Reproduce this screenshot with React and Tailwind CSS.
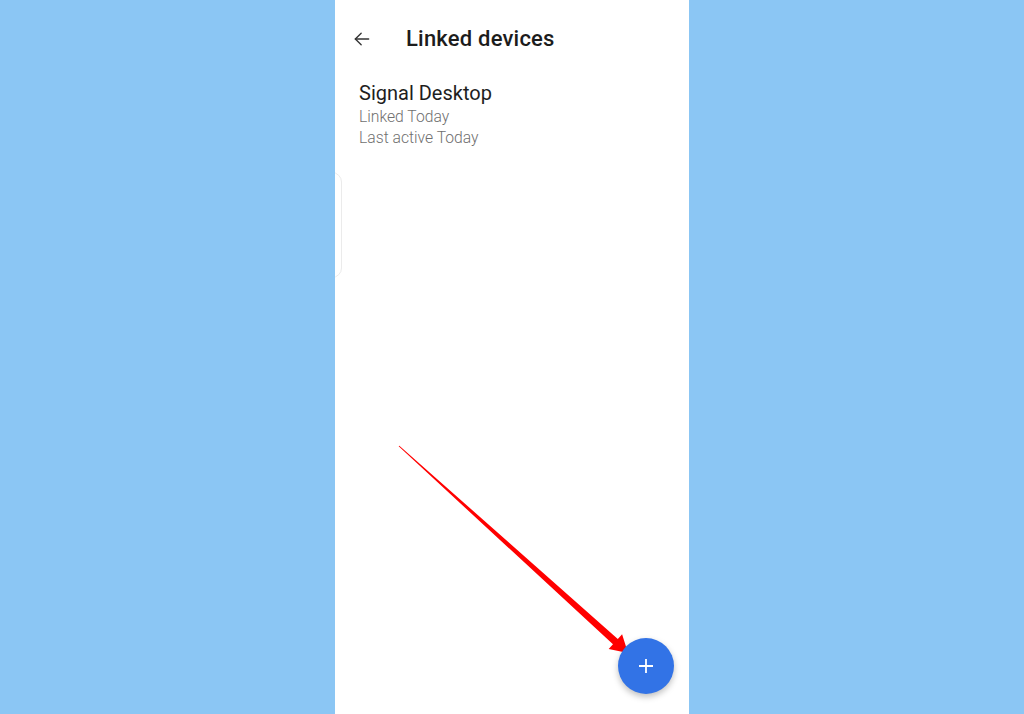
import React from 'react';

const Arrow = () => {
  // arrow drawn in panel coordinates (panel starts at x=335)
  const sx = 399 - 335, sy = 446;
  const tx = 628 - 335, ty = 653;
  const dx = tx - sx, dy = ty - sy;
  const len = Math.hypot(dx, dy);
  const ux = dx / len, uy = dy / len;
  const nx = -uy, ny = ux;
  const head = 17;
  const bx = tx - ux * head, by = ty - uy * head;
  const sw = 0.5, bw = 3.6, hw = 10;
  const pts = [
    [sx + nx * sw, sy + ny * sw],
    [bx + nx * bw, by + ny * bw],
    [bx + nx * hw, by + ny * hw],
    [tx, ty],
    [bx - nx * hw, by - ny * hw],
    [bx - nx * bw, by - ny * bw],
    [sx - nx * sw, sy - ny * sw],
  ]
    .map((p) => p.join(','))
    .join(' ');
  return (
    <svg className="absolute inset-0 pointer-events-none" width="354" height="714">
      <polygon points={pts} fill="#ff0000" />
    </svg>
  );
};

export default function App() {
  return (
    <div className="w-full h-[714px] bg-[#8bc6f4] flex justify-center overflow-hidden" style={{ fontFamily: 'Roboto, "Noto Sans", sans-serif' }}>
      <div className="relative w-[354px] h-full bg-white overflow-hidden">
        {/* faint card edge peeking in from the left */}
        <div className="absolute left-[-40px] top-[172px] w-[47px] h-[106px] rounded-[10px] border border-[#ebebeb]" />

        <div className="flex items-center h-[77px] pl-[17px]">
          <svg width="20" height="20" viewBox="0 0 24 24" fill="none" stroke="#333" strokeWidth="1.6" strokeLinecap="round" strokeLinejoin="round">
            <path d="M20 12H4" />
            <path d="M11 5l-7 7 7 7" />
          </svg>
          <h1 className="ml-[34px] text-[22px] font-medium text-[#1c1c1c] tracking-[0.2px]">Linked devices</h1>
        </div>

        <div className="pl-[24px] pt-[3px] flex flex-col">
          <div className="text-[20px] leading-[26px] text-[#1e1e1e]">Signal Desktop</div>
          <div className="text-[15.7px] leading-[21px] font-light text-[#6f6f6f]">Linked Today</div>
          <div className="text-[15.7px] leading-[21px] font-light text-[#6f6f6f]">Last active Today</div>
        </div>

        <Arrow />

        <button className="absolute left-[283px] top-[638px] w-[56px] h-[56px] rounded-full bg-[#3273e6] flex items-center justify-center shadow-[0_3px_6px_rgba(0,0,0,0.25)]">
          <svg width="18" height="18" viewBox="0 0 18 18" stroke="white" strokeWidth="1.8">
            <path d="M9 2v14M2 9h14" />
          </svg>
        </button>
      </div>
    </div>
  );
}
